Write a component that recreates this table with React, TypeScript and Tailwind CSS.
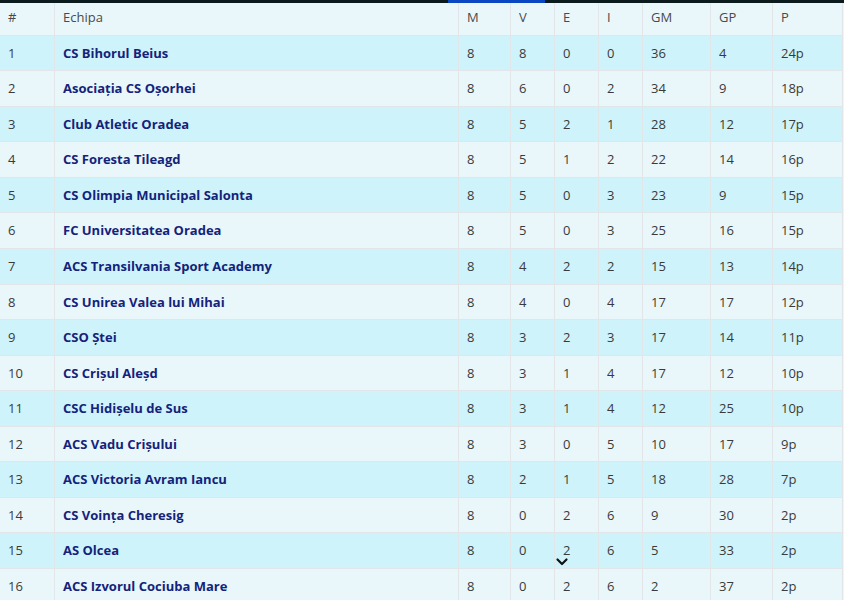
import React from "react";

const rows: [number, string, number, number, number, number, number, number, string][] = [
  [1, "CS Bihorul Beius", 8, 8, 0, 0, 36, 4, "24p"],
  [2, "Asociația CS Oșorhei", 8, 6, 0, 2, 34, 9, "18p"],
  [3, "Club Atletic Oradea", 8, 5, 2, 1, 28, 12, "17p"],
  [4, "CS Foresta Tileagd", 8, 5, 1, 2, 22, 14, "16p"],
  [5, "CS Olimpia Municipal Salonta", 8, 5, 0, 3, 23, 9, "15p"],
  [6, "FC Universitatea Oradea", 8, 5, 0, 3, 25, 16, "15p"],
  [7, "ACS Transilvania Sport Academy", 8, 4, 2, 2, 15, 13, "14p"],
  [8, "CS Unirea Valea lui Mihai", 8, 4, 0, 4, 17, 17, "12p"],
  [9, "CSO Ștei", 8, 3, 2, 3, 17, 14, "11p"],
  [10, "CS Crișul Aleșd", 8, 3, 1, 4, 17, 12, "10p"],
  [11, "CSC Hidișelu de Sus", 8, 3, 1, 4, 12, 25, "10p"],
  [12, "ACS Vadu Crișului", 8, 3, 0, 5, 10, 17, "9p"],
  [13, "ACS Victoria Avram Iancu", 8, 2, 1, 5, 18, 28, "7p"],
  [14, "CS Voința Cheresig", 8, 0, 2, 6, 9, 30, "2p"],
  [15, "AS Olcea", 8, 0, 2, 6, 5, 33, "2p"],
  [16, "ACS Izvorul Cociuba Mare", 8, 0, 2, 6, 2, 37, "2p"],
];

const widths = [55, 404, 52, 44, 44, 44, 68, 62, 70];
const heads = ["#", "Echipa", "M", "V", "E", "I", "GM", "GP", "P"];

export default function App() {
  return (
    <div
      className="relative w-[844px] h-[600px] overflow-hidden bg-[#e9f7fb]"
      style={{ fontFamily: '"Open Sans", "Liberation Sans", sans-serif' }}
    >
      <table className="-ml-px border-collapse table-fixed w-[843px] text-[13px] leading-[1.42857] text-[#3a3a3a]">
        <colgroup>
          {widths.map((w, i) => (
            <col key={i} style={{ width: w }} />
          ))}
        </colgroup>
        <thead>
          <tr className="bg-[#e9f7fb]">
            {heads.map((h, i) => (
              <th
                key={i}
                className="px-2 py-2 text-left font-normal text-[#4a4a4a] border border-[#e2e6e8] border-t-0"
              >
                {h}
              </th>
            ))}
          </tr>
        </thead>
        <tbody>
          {rows.map((r, ri) => (
            <tr key={ri} className={ri % 2 === 0 ? "bg-[#cff3fa]" : "bg-[#e9f7fb]"}>
              {r.map((c, ci) => (
                <td
                  key={ci}
                  className={
                    "px-2 py-2 border border-[#e2e6e8] " +
                    (ci === 1 ? "font-bold text-[#14237a]" : "")
                  }
                >
                  {c}
                </td>
              ))}
            </tr>
          ))}
        </tbody>
      </table>
      <div className="absolute top-0 left-0 w-full h-[3px] bg-[#0b1a1c]" />
      <div className="absolute top-0 left-[448px] w-[97px] h-[3px] bg-[#0a45c2]" />
      <svg
        className="absolute left-[555px] top-[557px]"
        width="14"
        height="10"
        viewBox="0 0 14 10"
      >
        <path d="M2.5 2.5 L7 7 L11.5 2.5" fill="none" stroke="#111" strokeWidth="2.2" strokeLinecap="round" strokeLinejoin="round" />
      </svg>
    </div>
  );
}
